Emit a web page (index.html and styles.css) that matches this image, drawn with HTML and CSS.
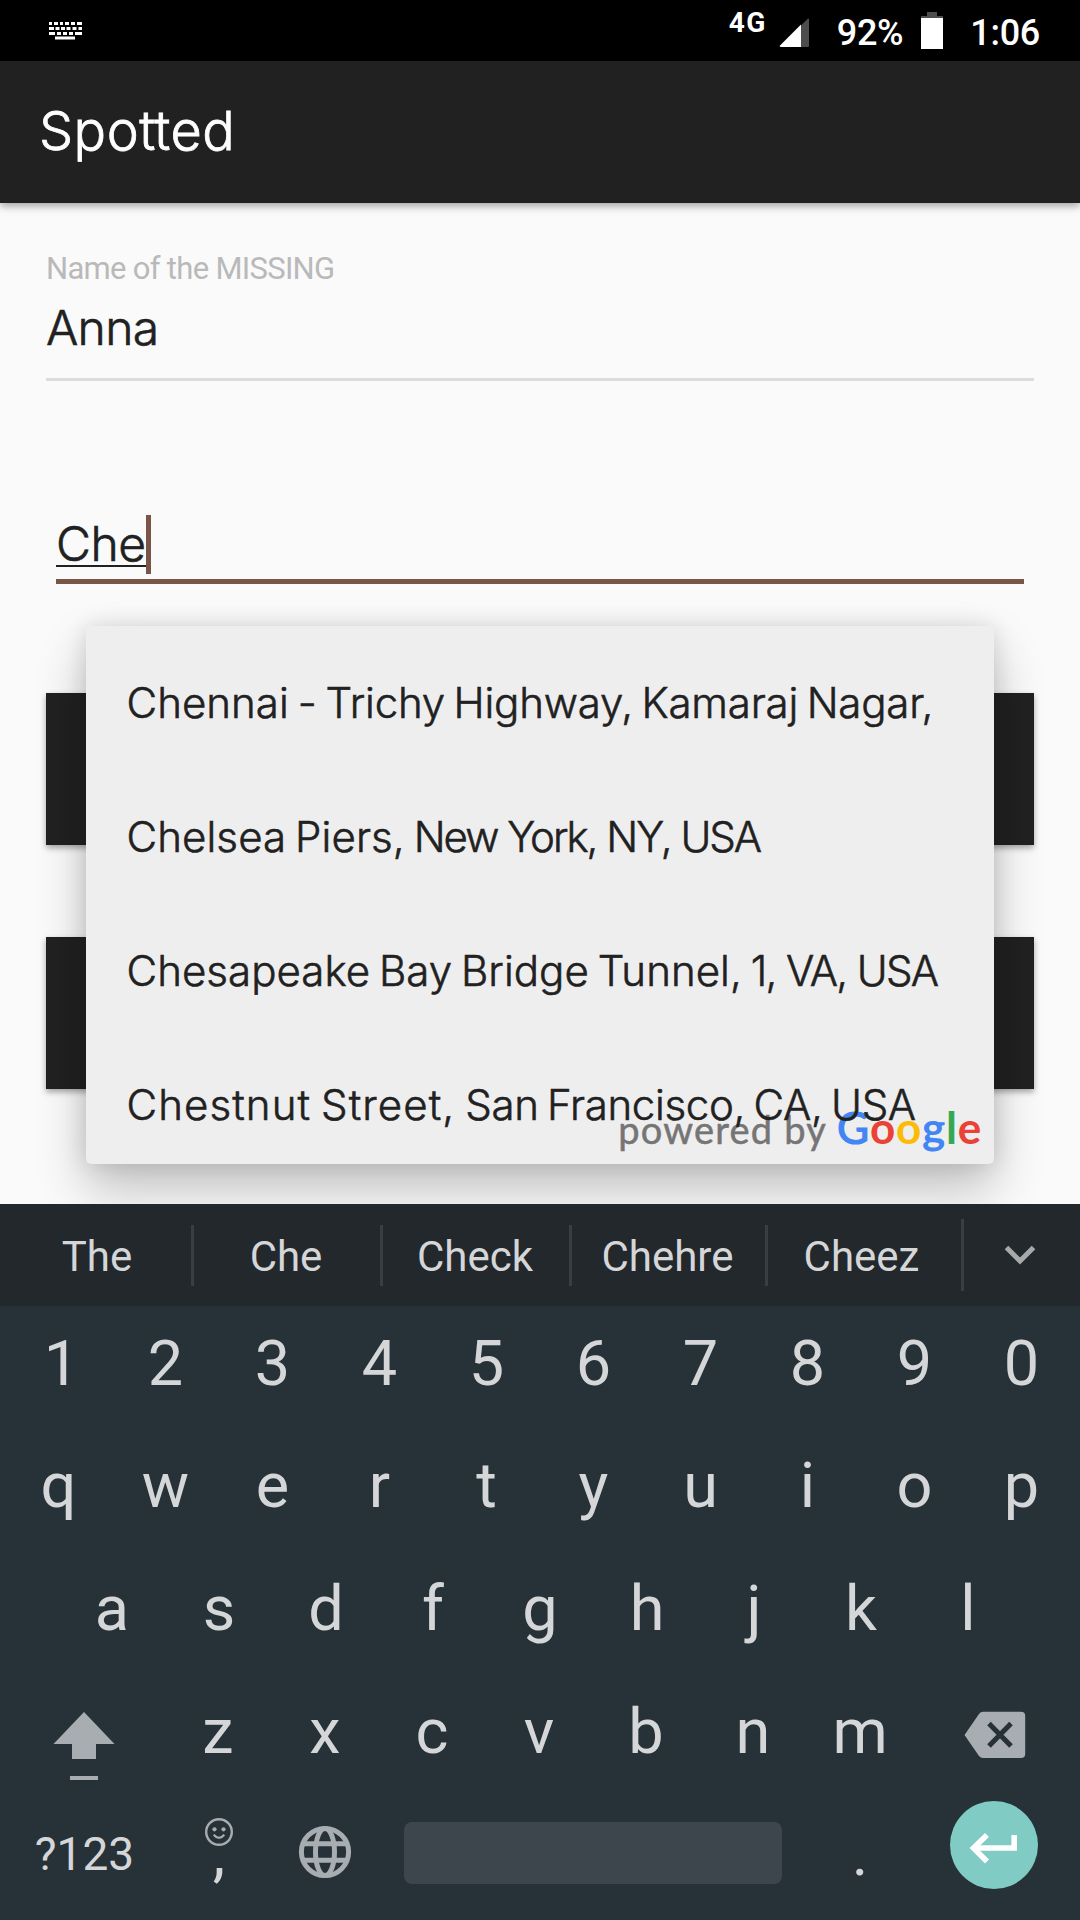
FILE: index.html
```html
<!DOCTYPE html>
<html lang="en">
<head>
<meta charset="utf-8">
<title>Spotted</title>
<link rel="stylesheet" href="styles.css">
</head>
<body>
<div class="screen">
  <header class="status">
    <svg class="status-kbd" width="36" height="20" viewBox="0 0 36 20" fill="#fff">
      <path d="M1 1h3v3h-3zM6 1h4v3h-4zM12 1h3v3h-3zM17 1h4v3h-4zM23 1h4v3h-4zM29 1h5v3h-5zM1 6h5v3h-5zM7.500 6h4v3h-4zM13 6h4v3h-4zM18.500 6h4v3h-4zM24.500 6h4v3h-4zM30.500 6h3.500v3h-3.500zM1 11h6v3h-6zM9 11h4v3h-4zM15 11h4v3h-4zM21 11h4v3h-4zM27 11h7v3h-7zM7 15.500h20v3h-20z"/>
    </svg>
    <span class="net">4G</span>
    <svg class="signal" width="31" height="31" viewBox="0 0 31 31">
      <path d="M22 8.500L28.500 2Q30 1 30 2.500V29Q30 30 29 30H22z" fill="#4d4d4d"/>
      <path d="M22 7.500V30H2Q0 29.500 1 28.500z" fill="#fff"/>
    </svg>
    <span class="pct">92%</span>
    <svg class="battery" width="22" height="37" viewBox="0 0 22 37">
      <path d="M6 0h10v4h6v3H0V4h6z" fill="#4d4d4d"/><path d="M0 6h22v31H0z" fill="#fff"/>
    </svg>
    <span class="clock">1:06</span>
  </header>
  <div class="appbar"><h1 class="title">Spo<span class="lig">t</span>ted</h1></div>
  <main class="form">
    <label class="label">Name of the MISSING</label>
    <div class="field">Anna</div>
    <div class="field-active"><span class="typed">Che</span><span class="cursor"></span></div>
    <div class="button"></div>
    <div class="button second"></div>
    <div class="popup">
      <div class="powered"><span class="by">powered by</span><span class="google"><b class="blue big">G</b><b class="red">o</b><b class="yellow">o</b><b class="blue">g</b><b class="green">l</b><b class="red">e</b></span></div>
      <ul class="places">
        <li><span class="fit-a">Chennai - </span><span class="fit-b">Trichy Highway, Kamaraj Nagar,</span></li>
        <li><span class="fit-c">Chelsea Piers, </span><span class="fit-d">New York, NY, USA</span></li>
        <li><span class="fit-e">Chesapeake Bay Bridge Tunnel, </span><span class="fit-f">1, VA, USA</span></li>
        <li><span class="fit-g">Chestnut Street, </span><span class="fit-h">San Francisco, CA, USA</span></li>
      </ul>
    </div>
  </main>
  <section class="keyboard">
    <div class="strip">
      <span>The</span><span>Che</span><span>Check</span><span>Chehre</span><span>Cheez</span>
      <div class="more"><svg width="32" height="20" viewBox="0 0 32 20"><path d="M2.500 2.500L16 16L29.500 2.500" fill="none" stroke="#a7a9aa" stroke-width="5"/></svg></div>
    </div>
    <div class="row digits"><span class="one">1</span><span>2</span><span>3</span><span>4</span><span>5</span><span>6</span><span>7</span><span>8</span><span>9</span><span>0</span></div>
    <div class="row"><span>q</span><span>w</span><span>e</span><span>r</span><span>t</span><span>y</span><span>u</span><span>i</span><span>o</span><span>p</span></div>
    <div class="row third"><span>a</span><span>s</span><span>d</span><span>f</span><span>g</span><span>h</span><span>j</span><span>k</span><span>l</span></div>
    <div class="row low fourth">
      <span class="wide"><svg class="shift" width="62" height="70" viewBox="0 0 62 70" fill="#a7adb0"><path d="M31 1L61.500 33H43V48H19V33H.5zM17 65h28v4H17z"/></svg></span>
      <span>z</span><span>x</span><span>c</span><span>v</span><span>b</span><span>n</span><span>m</span>
      <span class="wide"><svg class="del" width="62" height="48" viewBox="0 0 62 48"><path d="M19 .8H57Q61.200 .8 61.200 5V43Q61.200 47 57 47H19Q16.500 47 15 45L.5 24L15 3Q16.500 .8 19 .8z" fill="#a7adb0"/><path d="M25 12.500L47 35M47 12.500L25 35" stroke="#273238" stroke-width="5"/></svg></span>
    </div>
    <div class="row low bottom">
      <span class="wide sym">?123</span>
      <span class="comma"><svg class="smile" width="30" height="30" viewBox="0 0 30 30" fill="none" stroke="#a7adb0" stroke-width="2.400"><circle cx="15" cy="15" r="12.800"/><path d="M9.700 17.800Q15 24 20.300 17.800" stroke-width="2.200"/><g fill="#a7adb0" stroke="none"><circle cx="10.500" cy="12.300" r="2.100"/><circle cx="19.500" cy="12.300" r="2.100"/></g></svg>,</span>
      <span class="globe"><svg width="54" height="54" viewBox="0 0 54 54" fill="none" stroke="#a7adb0" stroke-width="5"><circle cx="27" cy="27" r="23.600"/><ellipse cx="27" cy="27" rx="9.500" ry="23.600"/><path d="M5 18.800H49M5 35.200H49"/></svg></span>
      <span class="space"></span>
      <span class="dot">.</span>
      <span class="wide"><i class="enter"><svg width="50" height="34" viewBox="0 0 50 34" fill="none" stroke="#fff" stroke-width="5.600"><path d="M45.200 4V17H5M18 4L4.500 17L18 30.500"/></svg></i></span>
    </div>
  </section>
</div>
</body>
</html>
```
FILE: styles.css
```css
body { margin: 0; }
.screen { width: 1080px; height: 1920px; overflow: hidden; display: flex; flex-direction: column; background: #fafafa; font-family: Roboto, sans-serif; }

.status { height: 61px; flex: none; background: #000; color: #fff; display: flex; align-items: flex-start; font-weight: 500; }
.status-kbd { margin: 21px auto 0 48px; }
.net { font-size: 28px; font-weight: 700; line-height: 46px; letter-spacing: 1.5px; }
.signal { margin: 17px 0 0 12px; }
.pct { margin-left: 27px; font-size: 36px; line-height: 67px; letter-spacing: -.3px; }
.battery { margin: 12px 0 0 18px; }
.clock { margin: 0 40px 0 27px; font-size: 36px; line-height: 67px; letter-spacing: -.3px; }

.appbar { height: 142px; flex: none; background: #212121; box-shadow: 0 3px 8px rgba(0,0,0,.36); position: relative; z-index: 1; }
.title { margin: 0; padding-left: 39px; font: 300 54px/140px Inter, sans-serif; letter-spacing: .5px; color: #fff; -webkit-text-stroke: .8px #fff; }
.lig { letter-spacing: -1px; }

.form { position: relative; height: 1001px; flex: none; box-sizing: border-box; padding: 46px 46px 0; display: flex; flex-direction: column; }
.label { font-size: 31px; line-height: 40px; letter-spacing: -.7px; color: #b9b9b9; }
.field { margin-top: 9px; padding-bottom: 20px; border-bottom: 3px solid #dcdcdc; font: 300 48px/60px Inter, sans-serif; letter-spacing: -.7px; color: #212121; -webkit-text-stroke: .6px #212121; }
.field-active { display: flex; margin: 134px 10px 0; padding-bottom: 5px; border-bottom: 5px solid #795548; font: 300 48px/57px Inter, sans-serif; letter-spacing: -.5px; color: #212121; -webkit-text-stroke: .6px #212121; }
.typed { height: 50px; border-bottom: 2px solid #212121; }
.cursor { width: 5px; height: 59px; background: #795548; }
.button { margin-top: 109px; height: 152px; background: #212121; box-shadow: 0 3px 6px rgba(0,0,0,.34); }
.second { margin-top: 92px; }

.popup { position: absolute; left: 86px; top: 423px; width: 908px; height: 538px; border-radius: 5px; background: #eee; box-shadow: 0 24px 50px rgba(0,0,0,.24), 0 0 22px rgba(0,0,0,.12); }
.places { position: relative; display: flex; flex-direction: column; list-style: none; margin: 0; padding: 10px 0 0 40.500px; height: 528px; overflow: hidden; font: 300 42px/134px Inter, sans-serif; word-spacing: -3px; color: #212121; -webkit-text-stroke: .55px #212121; white-space: pre; }
.places li { flex: none; height: 134px; }
.fit-a { letter-spacing: .05px; }
.fit-b { letter-spacing: -.2px; }
.fit-c { letter-spacing: .1px; }
.fit-d { letter-spacing: -2px; word-spacing: 0; }
.fit-e { letter-spacing: .05px; }
.fit-f { letter-spacing: -1.650px; word-spacing: 0; }
.fit-g { letter-spacing: 1.100px; }
.fit-h { letter-spacing: -.330px; }
.powered { position: absolute; right: 12px; bottom: 5px; display: flex; align-items: baseline; font-family: Lato, sans-serif; line-height: 60px; }
.by { font-size: 38px; letter-spacing: 1.200px; color: #757575; margin-right: 10px; -webkit-text-stroke: .5px #757575; }
.google { font-size: 44px; letter-spacing: .8px; }
.google b { font-weight: 700; }
.google .big { font-weight: 400; -webkit-text-stroke: 1.200px #4285f4; }
.blue { color: #4285f4; }
.red { color: #ea4335; }
.yellow { color: #fbbc05; }
.green { color: #34a853; }

.keyboard { position: relative; height: 716px; background: #273238; color: #d5d6d8; }
.strip { height: 102px; background: #23282c; display: grid; grid-template-columns: 194px 189px 189px 196px 196px 116px; align-items: center; }
.strip > span { height: 61px; line-height: 64px; font-size: 42px; text-align: center; padding-right: 2px; border-right: 3px solid #393e42; }
.strip > span:first-child { padding: 0 0 0 3px; }
.strip > span:nth-child(5) { height: 72px; line-height: 75px; padding-right: 6px; }
.more { display: flex; justify-content: center; align-items: center; padding-right: 5px; }
.row { height: 122.700px; display: flex; justify-content: center; font-size: 63px; line-height: 114px; text-align: center; }
.row > span { width: 107px; flex: none; }
.digits { line-height: 116px; }
.third { line-height: 115px; }
.fourth { line-height: 116px; }
.row > .one { box-sizing: border-box; padding-left: 6px; }
.low { padding-right: 2px; }
.row > .wide { width: 160px; display: flex; justify-content: center; align-items: flex-start; }
.shift { margin: 37px 5px 0 4px; }
.del { margin: 37px 0 0 2px; }
.bottom > .sym { font-size: 46px; }
.row > .comma { position: relative; text-indent: 2px; }
.smile { position: absolute; left: 39px; top: 20px; }
.row > .globe { display: flex; justify-content: center; align-items: flex-start; padding-top: 28px; }
.row > .space { width: 378px; height: 62px; margin: 25px 25px 0; border-radius: 8px; background: #3c464c; }
.enter { width: 88px; height: 88px; margin-top: 4px; border-radius: 50%; background: #80cbc4; display: flex; align-items: center; justify-content: center; }
.enter svg { margin-top: 6px; }
```
